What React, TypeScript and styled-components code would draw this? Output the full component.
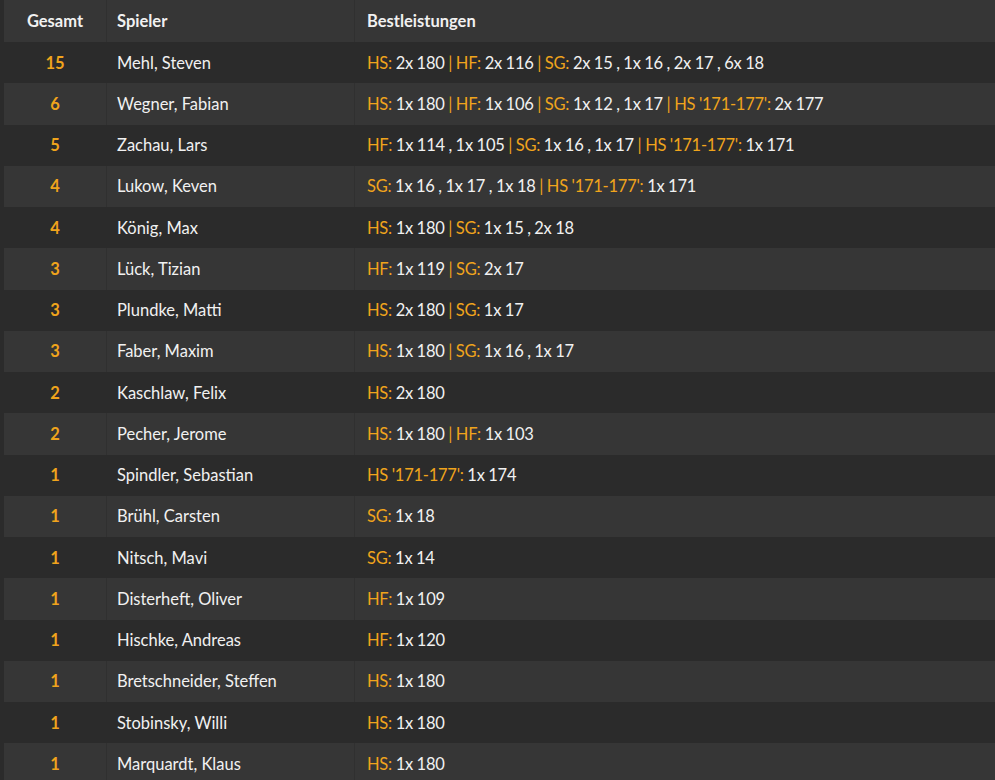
import * as React from 'react'
import styled, { createGlobalStyle } from 'styled-components'

type Part = { label: string; value: string }
type Player = { total: number; name: string; parts: Part[] }

const players: Player[] = [
  { total: 15, name: 'Mehl, Steven', parts: [
    { label: 'HS:', value: '2x 180' },
    { label: 'HF:', value: '2x 116' },
    { label: 'SG:', value: '2x 15 , 1x 16 , 2x 17 , 6x 18' },
  ] },
  { total: 6, name: 'Wegner, Fabian', parts: [
    { label: 'HS:', value: '1x 180' },
    { label: 'HF:', value: '1x 106' },
    { label: 'SG:', value: '1x 12 , 1x 17' },
    { label: "HS '171-177':", value: '2x 177' },
  ] },
  { total: 5, name: 'Zachau, Lars', parts: [
    { label: 'HF:', value: '1x 114 , 1x 105' },
    { label: 'SG:', value: '1x 16 , 1x 17' },
    { label: "HS '171-177':", value: '1x 171' },
  ] },
  { total: 4, name: 'Lukow, Keven', parts: [
    { label: 'SG:', value: '1x 16 , 1x 17 , 1x 18' },
    { label: "HS '171-177':", value: '1x 171' },
  ] },
  { total: 4, name: 'König, Max', parts: [
    { label: 'HS:', value: '1x 180' },
    { label: 'SG:', value: '1x 15 , 2x 18' },
  ] },
  { total: 3, name: 'Lück, Tizian', parts: [
    { label: 'HF:', value: '1x 119' },
    { label: 'SG:', value: '2x 17' },
  ] },
  { total: 3, name: 'Plundke, Matti', parts: [
    { label: 'HS:', value: '2x 180' },
    { label: 'SG:', value: '1x 17' },
  ] },
  { total: 3, name: 'Faber, Maxim', parts: [
    { label: 'HS:', value: '1x 180' },
    { label: 'SG:', value: '1x 16 , 1x 17' },
  ] },
  { total: 2, name: 'Kaschlaw, Felix', parts: [{ label: 'HS:', value: '2x 180' }] },
  { total: 2, name: 'Pecher, Jerome', parts: [
    { label: 'HS:', value: '1x 180' },
    { label: 'HF:', value: '1x 103' },
  ] },
  { total: 1, name: 'Spindler, Sebastian', parts: [{ label: "HS '171-177':", value: '1x 174' }] },
  { total: 1, name: 'Brühl, Carsten', parts: [{ label: 'SG:', value: '1x 18' }] },
  { total: 1, name: 'Nitsch, Mavi', parts: [{ label: 'SG:', value: '1x 14' }] },
  { total: 1, name: 'Disterheft, Oliver', parts: [{ label: 'HF:', value: '1x 109' }] },
  { total: 1, name: 'Hischke, Andreas', parts: [{ label: 'HF:', value: '1x 120' }] },
  { total: 1, name: 'Bretschneider, Steffen', parts: [{ label: 'HS:', value: '1x 180' }] },
  { total: 1, name: 'Stobinsky, Willi', parts: [{ label: 'HS:', value: '1x 180' }] },
  { total: 1, name: 'Marquardt, Klaus', parts: [{ label: 'HS:', value: '1x 180' }] },
]

const GlobalStyle = createGlobalStyle`
  html, body {
    margin: 0;
    background: #2b2b2b;
    overflow: hidden;
  }
  body {
    font-family: Lato, "Open Sans", sans-serif;
  }
`

const Board = styled.div`
  width: 1040px;
  padding-left: 4px;
  display: flex;
  flex-direction: column;
`

const Row = styled.div<{ $head?: boolean; $shade?: boolean }>`
  display: grid;
  grid-template-columns: 102px 247px 1fr;
  column-gap: 1px;
  height: ${(p) => (p.$head ? '42px' : '41.25px')};
  background: ${(p) => (p.$shade ? '#303030' : 'transparent')};
  font-size: 16.5px;
  line-height: 20px;
  font-weight: ${(p) => (p.$head ? 700 : 400)};
  color: #f1f1f1;
`

const Cell = styled.div<{ $shade?: boolean; $center?: boolean; $wide?: boolean }>`
  display: flex;
  align-items: center;
  justify-content: ${(p) => (p.$center ? 'center' : 'flex-start')};
  padding: 0 ${(p) => (p.$center ? '0' : '10px')} 0
    ${(p) => (p.$center ? '0' : p.$wide ? '12px' : '10px')};
  background: ${(p) => (p.$shade ? '#363636' : '#2b2b2b')};
  white-space: nowrap;
`

const Total = styled.span`
  color: #f0a41c;
  font-weight: 700;
`

const Label = styled.span`
  color: #f0a41c;
`

const BestLine = styled.span`
  letter-spacing: -0.25px;
  word-spacing: -0.3px;
`

const Best = ({ parts }: { parts: Part[] }) => (
  <BestLine>
    {parts.map((p, i) => (
      <React.Fragment key={i}>
        {i > 0 ? <Label> | </Label> : null}
        <Label>{p.label}</Label> {p.value}
      </React.Fragment>
    ))}
  </BestLine>
)

export default function App() {
  return (
    <>
      <GlobalStyle />
      <Board>
        <Row $head $shade>
          <Cell $shade $center>Gesamt</Cell>
          <Cell $shade>Spieler</Cell>
          <Cell $shade $wide>Bestleistungen</Cell>
        </Row>
        {players.map((pl, i) => {
          const shade = i % 2 === 1
          return (
            <Row key={pl.name} $shade={shade}>
              <Cell $shade={shade} $center>
                <Total>{pl.total}</Total>
              </Cell>
              <Cell $shade={shade}>{pl.name}</Cell>
              <Cell $shade={shade} $wide>
                <Best parts={pl.parts} />
              </Cell>
            </Row>
          )
        })}
      </Board>
    </>
  )
}
